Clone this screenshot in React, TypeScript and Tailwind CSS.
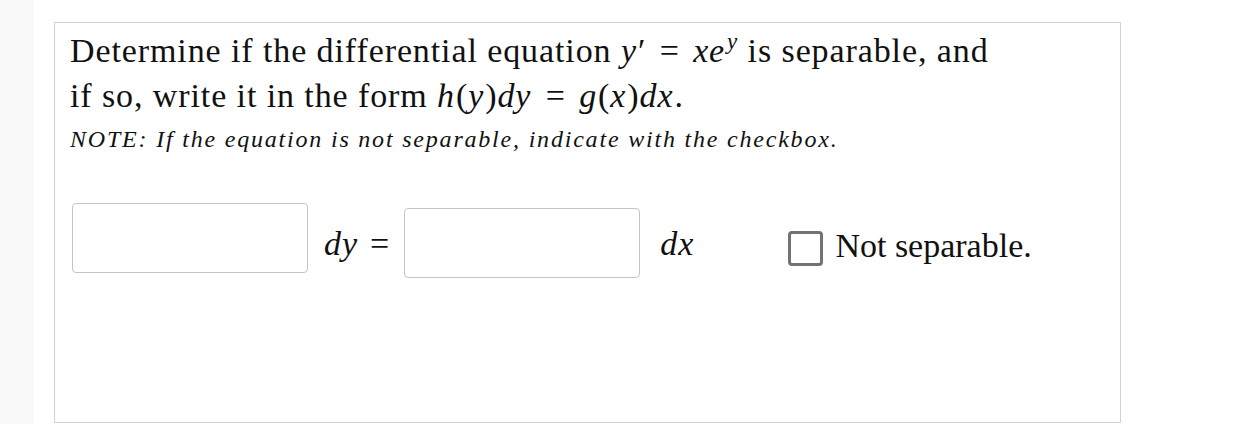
import React, { useState } from "react";

const serif = { fontFamily: '"Liberation Serif", "Times New Roman", serif' };

function M({ children }: { children: React.ReactNode }) {
  return <span className="italic pr-[1px]">{children}</span>;
}

function Eq() {
  return <span className="mx-[4px]">=</span>;
}

export default function App() {
  const [lhs, setLhs] = useState("");
  const [rhs, setRhs] = useState("");
  const [notSep, setNotSep] = useState(false);

  return (
    <div className="flex w-[1256px] h-[424px] bg-white overflow-hidden text-[#111]" style={serif}>
      {/* left strip */}
      <div className="w-[34px] h-full bg-[#f9f9f9] shrink-0" />

      <div className="ml-[20px] mt-[22px] w-[1067px] h-[401px] border border-[#d2d2d2] bg-white pl-[15px] pt-[5px]">
        {/* Question */}
        <p className="text-[34px] leading-[45px] tracking-[0.9px]">
          Determine if the differential equation <M>y</M>′ <Eq /> <M>xe</M>
          <sup className="italic text-[23px] relative -top-[13px] ml-[1px]">y</sup> is separable, and
          <br />
          if so, write it in the form <M>h</M>(<M>y</M>)<M>dy</M> <Eq /> <M>g</M>(<M>x</M>)<M>dx</M>.
        </p>
        <p className="mt-[6px] text-[24px] leading-[30px] italic tracking-[1.8px]">
          NOTE: If the equation is not separable, indicate with the checkbox.
        </p>

        {/* Answer row */}
        <div className="mt-[49px] flex items-start">
          <input
            value={lhs}
            onChange={(e) => setLhs(e.target.value)}
            className="ml-[2px] w-[236px] h-[70px] rounded-[4px] border border-[#c4c4c4] bg-white px-3 text-[24px] outline-none"
          />
          <span className="ml-[16px] mt-[21px] text-[34px] leading-[40px] italic tracking-[1px]">dy</span>
          <span className="ml-[12px] mt-[21px] text-[34px] leading-[40px]">=</span>
          <input
            value={rhs}
            onChange={(e) => setRhs(e.target.value)}
            className="ml-[15px] mt-[5px] w-[236px] h-[70px] rounded-[4px] border border-[#c4c4c4] bg-white px-3 text-[24px] outline-none"
          />
          <span className="ml-[20px] mt-[21px] text-[34px] leading-[40px] italic tracking-[1px]">dx</span>
          <label className="ml-[94px] flex items-start cursor-pointer">
            <span
              onClick={() => setNotSep(!notSep)}
              className="mt-[28px] w-[35px] h-[35px] rounded-[4px] border-[3px] border-[#737373] bg-white flex items-center justify-center text-[22px] leading-none"
            >
              {notSep ? "✓" : ""}
            </span>
            <span className="ml-[12px] mt-[23px] text-[34px] leading-[40px]">Not separable.</span>
          </label>
        </div>
      </div>
    </div>
  );
}
